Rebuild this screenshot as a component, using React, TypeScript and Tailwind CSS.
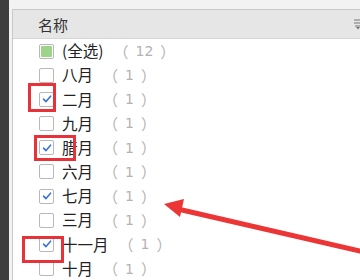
import React from 'react';

interface Row {
  label: string;
  count: number;
  checked: boolean;
}

const rows: Row[] = [
  { label: '八月', count: 1, checked: false },
  { label: '二月', count: 1, checked: true },
  { label: '九月', count: 1, checked: false },
  { label: '腊月', count: 1, checked: true },
  { label: '六月', count: 1, checked: false },
  { label: '七月', count: 1, checked: true },
  { label: '三月', count: 1, checked: false },
  { label: '十一月', count: 1, checked: true },
  { label: '十月', count: 1, checked: false },
];

function Box({ state }: { state: 'on' | 'off' | 'mixed' }) {
  return (
    <span className="w-[15px] h-[15px] border border-[#b8b8b8] rounded-[2px] bg-white flex items-center justify-center shrink-0">
      {state === 'mixed' && <span className="w-[11px] h-[11px] bg-[#9ed48a] rounded-[1px]" />}
      {state === 'on' && (
        <svg width="10" height="10" viewBox="0 0 10 10">
          <path d="M1.5 5.2 L4 7.6 L8.6 2.2" fill="none" stroke="#3b73d6" strokeWidth="1.6" strokeLinecap="round" strokeLinejoin="round" />
        </svg>
      )}
    </span>
  );
}

function Count({ n }: { n: number }) {
  return (
    <span className="ml-[10px] text-[15px] text-[#b3b3b3] leading-none flex items-center">
      <span>（</span>
      <span className="px-[7px] text-[14px]" style={{ fontFamily: '"DejaVu Sans", sans-serif' }}>{n}</span>
      <span>）</span>
    </span>
  );
}

export default function App() {
  return (
    <div
      className="relative w-[360px] h-[280px] overflow-hidden flex bg-[#f2f2f2]"
      style={{ fontFamily: '"Noto Sans CJK SC", "Noto Sans", sans-serif' }}
    >
      {/* dark window edge */}
      <div className="w-[9px] bg-[#3e3e3e] shrink-0" />

      <div className="flex-1 pl-[3px] pt-[9px]">
        <div className="h-full bg-white border-l border-t border-[#c9c9c9]">
          {/* Header */}
          <div className="h-[29px] bg-[#e6e6e6] border-b border-[#d6d6d6] flex items-center justify-between pl-[25px]">
            <span className="text-[15px] text-[#333] leading-none">名称</span>
            <svg width="8" height="12" viewBox="0 0 8 12" className="mr-[-2px]">
              <path d="M0 2h8M0 5h8M1 8h6" stroke="#777" strokeWidth="1.2" />
              <path d="M2 9 L4 11.5 L6 9Z" fill="#777" />
            </svg>
          </div>

          {/* List */}
          <div className="pl-[26px]">
            <div className="h-[24px] flex items-center">
              <Box state="mixed" />
              <span className="ml-[8px] text-[15.5px] text-[#222] leading-none">(全选)</span>
              <Count n={12} />
            </div>
            {rows.map((r) => (
              <div key={r.label} className="h-[24.2px] flex items-center">
                <Box state={r.checked ? 'on' : 'off'} />
                <span className="ml-[8px] text-[15.5px] text-[#222] leading-none">{r.label}</span>
                <Count n={r.count} />
              </div>
            ))}
          </div>
        </div>
      </div>

      {/* Annotations */}
      <div className="absolute left-[28px] top-[83px] w-[28px] h-[29px] border-[3px] border-[#e8323a]" />
      <div className="absolute left-[34px] top-[135px] w-[42px] h-[26px] border-[3px] border-[#e8323a]" />
      <div className="absolute left-[22px] top-[236px] w-[42px] h-[27px] border-[3px] border-[#e8323a]" />
      <svg className="absolute left-0 top-0" width="360" height="280" viewBox="0 0 360 280">
        <path d="M360 251 L182 210" stroke="#ec3636" strokeWidth="5" strokeLinecap="round" />
        <path d="M164 204 L184 199 L180 217 Z" fill="#ec3636" />
      </svg>
    </div>
  );
}
